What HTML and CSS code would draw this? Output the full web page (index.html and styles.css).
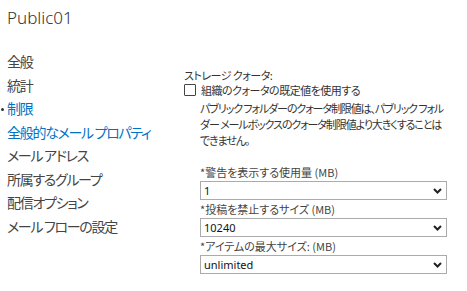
FILE: index.html
```html
<!DOCTYPE html>
<html>
    <head>
        <meta charset="utf-8">
        <link rel="stylesheet" href="styles.css">
    </head>
    <body>
        <h1 class="title">Public01</h1>
        <div class="page">
            <ul class="nav">
                <li>全般</li>
                <li>統計</li>
                <li class="active">制限</li>
                <li class="hover">全般的なメール プロパティ</li>
                <li>メール アドレス</li>
                <li>所属するグループ</li>
                <li>配信オプション</li>
                <li>メール フローの設定</li>
            </ul>
            <div class="panel">
                <div class="caption">ストレージ クォータ:</div>
                <label class="check">
                    <span class="box"></span>
                    <span>組織のクォータの既定値を使用する</span>
                </label>
                <p class="note">パブリック フォルダーのクォータ制限値は、パブリック フォル<br>ダー メールボックスのクォータ制限値より大きくすることは<br>できません。</p>

                <div class="field">
                    <div class="label">*警告を表示する使用量 (MB)</div>
                    <div class="select">
                        <span>1</span>
                        <svg width="9" height="6" viewBox="0 0 9 6"><path d="M1 1 L4.5 4.5 L8 1" fill="none" stroke="#222" stroke-width="2"/></svg>
                    </div>
                </div>
                <div class="field">
                    <div class="label">*投稿を禁止するサイズ (MB)</div>
                    <div class="select">
                        <span>10240</span>
                        <svg width="9" height="6" viewBox="0 0 9 6"><path d="M1 1 L4.5 4.5 L8 1" fill="none" stroke="#222" stroke-width="2"/></svg>
                    </div>
                </div>
                <div class="field">
                    <div class="label">*アイテムの最大サイズ: (MB)</div>
                    <div class="select">
                        <span>unlimited</span>
                        <svg width="9" height="6" viewBox="0 0 9 6"><path d="M1 1 L4.5 4.5 L8 1" fill="none" stroke="#222" stroke-width="2"/></svg>
                    </div>
                </div>
            </div>
        </div>
    </body>
</html>
```

FILE: styles.css
```css
body{
    margin:0;
    background:#fff;
    color:#333;
    font-family:"Noto Sans", "Noto Sans CJK JP", sans-serif;
}
.title{
    margin:0;
    padding:6px 0 0 7px;
    height:44px;
    font-size:17px;
    font-weight:300;
    line-height:24px;
    color:#333;
}
.page{
    display:flex;
}
.nav{
    list-style:none;
    margin:0;
    padding:0 0 0 7px;
    width:177px;
    font-family:"Noto Sans CJK JP", sans-serif;
    font-feature-settings:"palt";
    font-size:14px;
    line-height:23.5px;
    letter-spacing:-1.3px;
    color:#444;
}
.nav li{
    position:relative;
    height:23.5px;
}
.nav li.active,
.nav li.hover{
    color:#0072c6;
}
.nav li.active::before{
    content:"";
    position:absolute;
    left:-6px;
    top:11px;
    width:3px;
    height:3px;
    border-radius:50%;
    background:#333;
}
.panel{
    width:264px;
    padding-top:19px;
    font-family:"Noto Sans CJK JP", sans-serif;
    font-feature-settings:"palt";
    font-size:11px;
    line-height:16px;
    color:#333;
}
.caption{
    height:12px;
    line-height:12px;
    letter-spacing:-0.5px;
}
.check{
    display:flex;
    align-items:center;
    gap:5px;
    height:18px;
    letter-spacing:-0.5px;
}
.box{
    width:10px;
    height:10px;
    border:1px solid #444;
    border-radius:1px;
    background:#fff;
}
.note{
    margin:1px 0 15px 16px;
    width:260px;
    height:48px;
    white-space:nowrap;
    letter-spacing:-1.1px;
}
.field{
    margin-left:16px;
}
.label{
    height:18px;
    line-height:18px;
    color:#444;
}
.select{
    position:relative;
    display:flex;
    align-items:center;
    box-sizing:border-box;
    width:247px;
    height:19px;
    padding-left:3px;
    border:1px solid #ababab;
    background:#fff;
    color:#111;
    font-family:"Noto Sans", sans-serif;
}
.select svg{
    position:absolute;
    right:4px;
    top:6px;
}
```
